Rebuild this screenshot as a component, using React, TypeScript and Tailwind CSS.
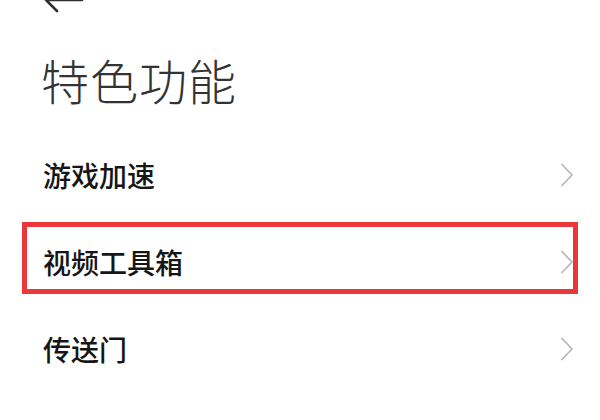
import React from 'react';

const items = ['游戏加速', '视频工具箱', '传送门'];

function Chevron() {
  return (
    <svg width="12" height="24" viewBox="0 0 12 24" fill="none">
      <path d="M1 1.5 L11 12 L1 22.5" stroke="#b8b8b8" strokeWidth="1.8" strokeLinecap="round" strokeLinejoin="round" />
    </svg>
  );
}

export default function App() {
  return (
    <div
      className="w-[600px] h-[420px] overflow-hidden bg-white flex flex-col"
      style={{ fontFamily: '"Noto Sans CJK SC", "Noto Sans", sans-serif' }}
    >
      {/* Back arrow, clipped by top edge */}
      <svg className="ml-[42px] -mt-[15px] shrink-0" width="42" height="30" viewBox="0 0 42 30" fill="none">
        <path d="M4 15 H40 M4 15 L15 26 M4 15 L15 4" stroke="#2e2e2e" strokeWidth="2.6" strokeLinecap="round" strokeLinejoin="round" />
      </svg>

      {/* Title */}
      <h1 className="mt-[40px] pl-[41px] text-[48px] leading-[48px] font-light text-[#333333] tracking-[1px]">
        特色功能
      </h1>

      {/* List */}
      <div className="mt-[32px] px-[22px] flex flex-col gap-[15px]">
        {items.map((label, i) => (
          <div
            key={label}
            className={
              i === 1
                ? 'h-[72px] flex items-center justify-between border-[5px] border-[#e9373c] pl-[16px] pt-[7px]'
                : 'h-[72px] flex items-center justify-between border-[5px] border-transparent pl-[16px] pt-[7px]'
            }
          >
            <span className="text-[28px] leading-[28px] font-medium text-[#161616]">{label}</span>
            <Chevron />
          </div>
        ))}
      </div>
    </div>
  );
}
